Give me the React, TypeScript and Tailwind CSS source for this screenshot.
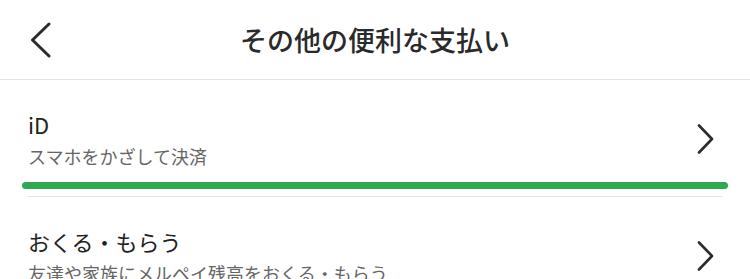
const font = { fontFamily: '"Noto Sans CJK JP", "Noto Sans", sans-serif' };

function ChevronRight() {
  return (
    <svg width="17" height="30" viewBox="0 0 17 30" fill="none" className="shrink-0">
      <polyline
        points="2,1.5 15,15 2,28.5"
        stroke="#2b2b2b"
        strokeWidth="2.6"
        strokeLinecap="round"
        strokeLinejoin="round"
      />
    </svg>
  );
}

function Row({ title, sub }: { title: string; sub: string }) {
  return (
    <div className="flex items-center justify-between pl-[28px] pr-[36px] pt-[29px] pb-[14px]">
      <div className="min-w-0">
        <div className="text-[22px] leading-[30px] text-[#222] whitespace-nowrap">{title}</div>
        <div className="mt-[5px] text-[18px] leading-[24px] text-[#666] whitespace-nowrap">{sub}</div>
      </div>
      <ChevronRight />
    </div>
  );
}

export default function App() {
  return (
    <div className="w-[750px] h-[279px] overflow-hidden bg-white" style={font}>
      {/* Header */}
      <div className="grid h-[80px] grid-cols-[80px_1fr_80px] items-center border-b border-[#e4e4e4]">
        <div className="pl-[30px]">
          <svg width="22" height="36" viewBox="0 0 22 36" fill="none">
            <polyline
              points="19,2 2.5,18 19,34"
              stroke="#2b2b2b"
              strokeWidth="3"
              strokeLinecap="round"
              strokeLinejoin="round"
            />
          </svg>
        </div>
        <h1 className="text-center text-[27px] font-medium leading-[36px] text-[#2a2a2a]">
          その他の便利な支払い
        </h1>
        <div />
      </div>

      {/* iD */}
      <Row title="iD" sub="スマホをかざして決済" />
      <div className="mx-[22px] h-[7px] rounded-full bg-[#2daa4f]" />
      <div className="mx-[28px] mt-[7px] h-px bg-[#e4e4e4]" />

      {/* おくる・もらう */}
      <Row title="おくる・もらう" sub="友達や家族にメルペイ残高をおくる・もらう" />
    </div>
  );
}
